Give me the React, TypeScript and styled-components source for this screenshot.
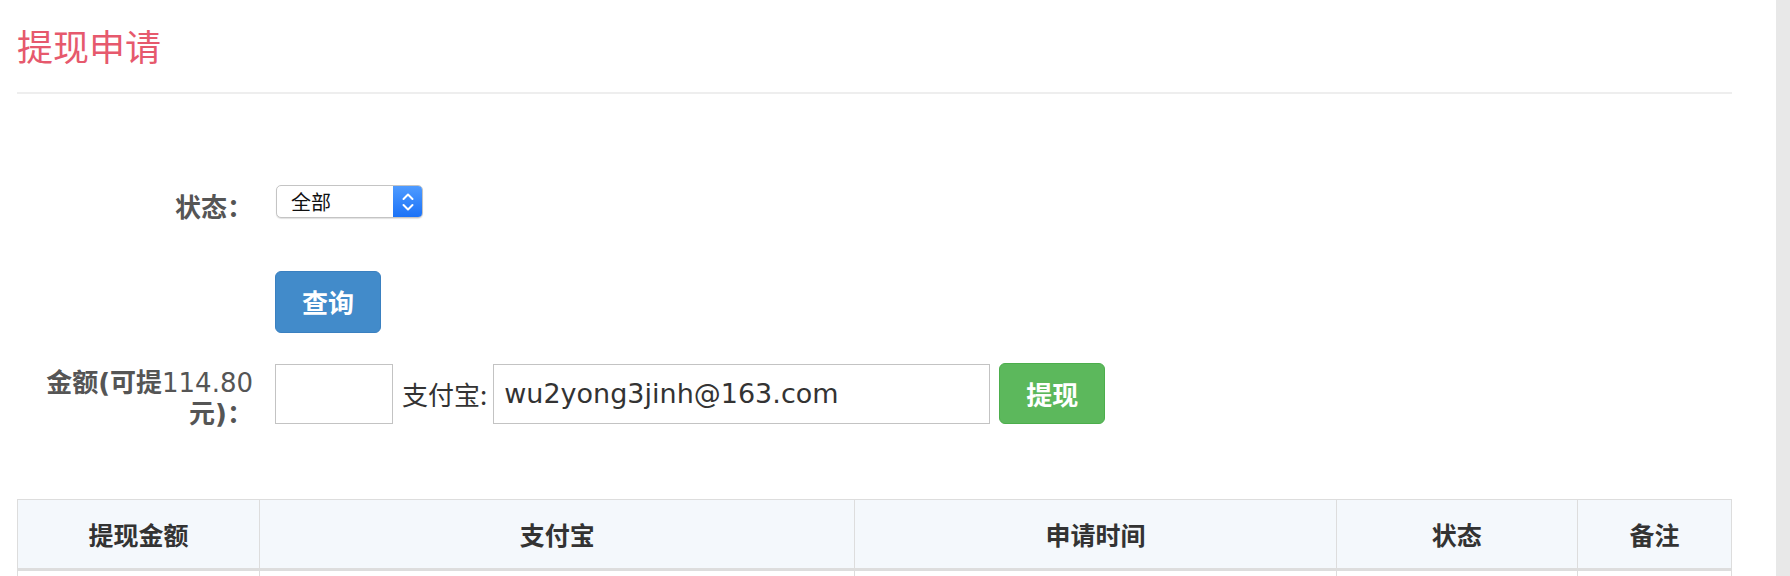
import React from "react";
import styled, { createGlobalStyle } from "styled-components";

const GlobalStyle = createGlobalStyle`
  html, body {
    margin: 0;
    padding: 0;
    background: #ffffff;
  }
  body {
    font-family: "DejaVu Sans", "Noto Sans CJK SC", sans-serif;
    color: #333333;
  }
  * { box-sizing: border-box; }
`;

const Shell = styled.div`
  display: flex;
  width: 1790px;
  height: 576px;
  overflow: hidden;
`;

const Main = styled.main`
  flex: 1;
  min-width: 0;
  padding: 0 44px 0 17px;
  background: #ffffff;
`;

const Track = styled.div`
  width: 14px;
  flex: none;
  background: #e8e8e8;
`;

const Title = styled.h3`
  margin: 0;
  padding: 25px 0 27px 0;
  font: 400 36px/40px "Noto Sans CJK SC", sans-serif;
  color: #e6596d;
  border-bottom: 2px solid #eeeeee;
`;

const Form = styled.form`
  display: flex;
  flex-direction: column;
  padding-top: 91px;
`;

const Row = styled.div<{ $space?: number }>`
  display: grid;
  grid-template-columns: 236px 1fr;
  column-gap: 22px;
  align-items: start;
  margin-top: ${(p) => p.$space ?? 0}px;
`;

const Label = styled.label<{ $pad?: number }>`
  text-align: right;
  font: 700 26px/31px "DejaVu Sans", "Noto Sans CJK SC", sans-serif;
  color: #555555;
  padding-top: ${(p) => p.$pad ?? 0}px;
`;

const Num = styled.span`
  font-weight: 400;
`;

const Controls = styled.div`
  display: flex;
  align-items: center;
`;

const SelectBox = styled.div`
  display: flex;
  width: 147px;
  height: 33px;
  border: 1px solid #c4c4c4;
  border-radius: 5px;
  overflow: hidden;
  background: #ffffff;
  box-shadow: 0 1px 1px rgba(0, 0, 0, 0.12);
  margin-left: 1px;
`;

const SelectText = styled.span`
  flex: 1;
  padding-left: 14px;
  font: 400 20px/31px "Noto Sans CJK SC", sans-serif;
  color: #111111;
`;

const SelectArrow = styled.span`
  width: 29px;
  display: flex;
  align-items: center;
  justify-content: center;
  background: linear-gradient(#4f9bff, #1b72f7);
`;

const Button = styled.button<{ $variant: "primary" | "success" }>`
  width: 106px;
  height: ${(p) => (p.$variant === "primary" ? 62 : 61)}px;
  border-radius: 6px;
  border: 1px solid ${(p) => (p.$variant === "primary" ? "#3a80c0" : "#4cae4c")};
  background: ${(p) => (p.$variant === "primary" ? "#428bca" : "#5cb85c")};
  color: #ffffff;
  font: 700 26px/1 "Noto Sans CJK SC", sans-serif;
  padding: 0;
  margin: 0;
  cursor: pointer;
`;

const TextInput = styled.input<{ $w: number }>`
  width: ${(p) => p.$w}px;
  height: 60px;
  border: 1px solid #c3c3c3;
  border-radius: 0;
  padding: 0 10px;
  margin: 0;
  font: 400 27px "DejaVu Sans", "Noto Sans CJK SC", sans-serif;
  color: #333333;
  background: #ffffff;
  outline: none;
`;

const InlineLabel = styled.span`
  margin: 0 6px 0 9px;
  font: 400 26px/31px "Noto Sans CJK SC", sans-serif;
  color: #333333;
`;

const ButtonGap = styled.span`
  width: 9px;
`;

const Table = styled.table`
  margin-top: 69px;
  width: 100%;
  table-layout: fixed;
  border-collapse: collapse;
  border: 1px solid #dddddd;
`;

const Th = styled.th`
  background: #f4f8fc;
  border: 1px solid #dddddd;
  border-bottom: 3px solid #dddddd;
  padding: 19px 12px;
  font: 700 25px/30px "Noto Sans CJK SC", sans-serif;
  color: #333333;
  text-align: center;
`;

const Td = styled.td`
  border: 1px solid #dddddd;
  height: 60px;
  padding: 12px;
`;

const columns = [
  { title: "提现金额", width: 242 },
  { title: "支付宝", width: 595 },
  { title: "申请时间", width: 481 },
  { title: "状态", width: 241 },
  { title: "备注", width: 154 },
];

const Chevrons = () => (
  <svg width="14" height="22" viewBox="0 0 14 22" fill="none">
    <path d="M2.5 8 L7 3.5 L11.5 8" stroke="#fff" strokeWidth="2" strokeLinecap="round" strokeLinejoin="round" />
    <path d="M2.5 14 L7 18.5 L11.5 14" stroke="#fff" strokeWidth="2" strokeLinecap="round" strokeLinejoin="round" />
  </svg>
);

export default function App() {
  return (
    <>
      <GlobalStyle />
      <Shell>
        <Main>
          <Title>提现申请</Title>
          <Form onSubmit={(e) => e.preventDefault()}>
            <Row>
              <Label $pad={8}>状态：</Label>
              <Controls>
                <SelectBox>
                  <SelectText>全部</SelectText>
                  <SelectArrow>
                    <Chevrons />
                  </SelectArrow>
                </SelectBox>
              </Controls>
            </Row>
            <Row $space={47}>
              <span />
              <Controls>
                <Button $variant="primary" type="button">查询</Button>
              </Controls>
            </Row>
            <Row $space={30}>
              <Label $pad={5}>
                金额(可提<Num>114.80</Num>元)：
              </Label>
              <Controls>
                <TextInput $w={118} />
                <InlineLabel>支付宝:</InlineLabel>
                <TextInput $w={497} defaultValue="wu2yong3jinh@163.com" />
                <ButtonGap />
                <Button $variant="success" type="button">提现</Button>
              </Controls>
            </Row>
          </Form>
          <Table>
            <colgroup>
              {columns.map((c) => (
                <col key={c.title} style={{ width: c.width }} />
              ))}
            </colgroup>
            <thead>
              <tr>
                {columns.map((c) => (
                  <Th key={c.title}>{c.title}</Th>
                ))}
              </tr>
            </thead>
            <tbody>
              <tr>
                {columns.map((c) => (
                  <Td key={c.title} />
                ))}
              </tr>
            </tbody>
          </Table>
        </Main>
        <Track />
      </Shell>
    </>
  );
}
